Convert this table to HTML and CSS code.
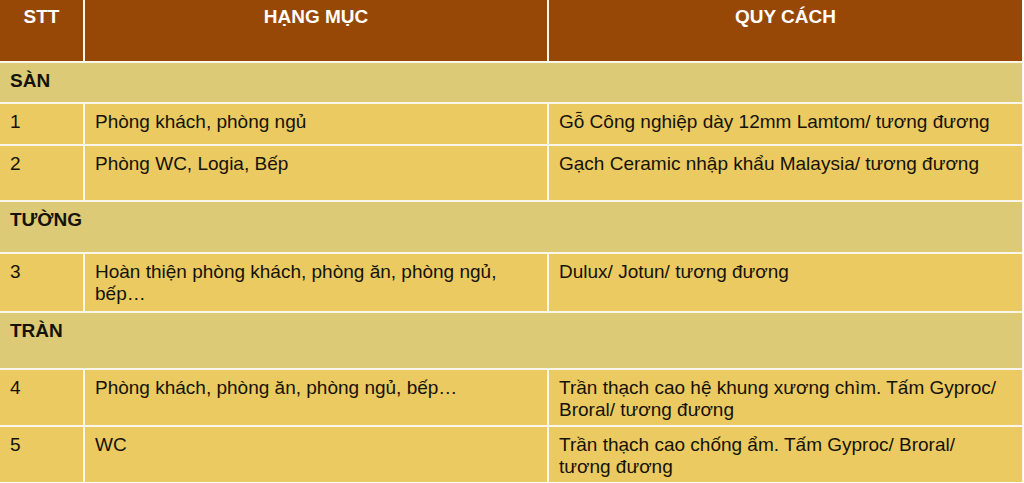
FILE: index.html
```html
<!DOCTYPE html>
<html lang="vi">
<head>
<meta charset="utf-8">
<title>Bảng vật liệu</title>
<link rel="stylesheet" href="styles.css">
</head>
<body>
<div class="table">
  <div class="cell head">STT</div>
  <div class="cell head">HẠNG MỤC</div>
  <div class="cell head">QUY CÁCH</div>

  <div class="cell section">SÀN</div>

  <div class="cell">1</div>
  <div class="cell">Phòng khách, phòng ngủ</div>
  <div class="cell">Gỗ Công nghiệp dày 12mm Lamtom/ tương đương</div>

  <div class="cell">2</div>
  <div class="cell">Phòng WC, Logia, Bếp</div>
  <div class="cell">Gạch Ceramic nhập khẩu Malaysia/ tương đương</div>

  <div class="cell section">TƯỜNG</div>

  <div class="cell">3</div>
  <div class="cell">Hoàn thiện phòng khách, phòng ăn, phòng ngủ,<br>bếp…</div>
  <div class="cell">Dulux/ Jotun/ tương đương</div>

  <div class="cell section">TRÀN</div>

  <div class="cell">4</div>
  <div class="cell">Phòng khách, phòng ăn, phòng ngủ, bếp…</div>
  <div class="cell">Trần thạch cao hệ khung xương chìm. Tấm Gyproc/<br>Broral/ tương đương</div>

  <div class="cell">5</div>
  <div class="cell">WC</div>
  <div class="cell">Trần thạch cao chống ẩm. Tấm Gyproc/ Broral/<br>tương đương</div>
</div>
</body>
</html>
```
FILE: styles.css
```css
html, body {
  margin: 0;
  padding: 0;
  background: #ffffff;
}

body {
  width: 1024px;
  height: 483px;
  overflow: hidden;
  font-family: "Liberation Sans", Arial, sans-serif;
}

.table {
  width: 1022px;
  display: grid;
  grid-template-columns: 83px 462px 1fr;
  grid-template-rows: 61px 39px 40px 54px 50px 57px 55px 55px 55px;
  gap: 2px;
  background: #fbf6ea;
  border-right: 1px solid #fbf6ea;
}

.cell {
  background: #ebca62;
  color: #151208;
  font-size: 19px;
  line-height: 22px;
  padding: 7px 10px 0 10px;
  box-sizing: border-box;
}

.head {
  background: #974807;
  color: #ffffff;
  font-weight: bold;
  text-align: center;
  padding-top: 6px;
}

.section {
  grid-column: 1 / -1;
  background: #dcca76;
  font-weight: bold;
}
```
